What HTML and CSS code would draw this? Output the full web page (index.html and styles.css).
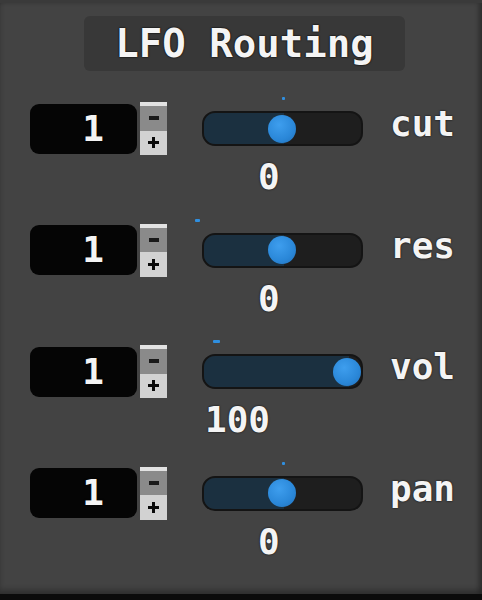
FILE: index.html
```html
<!DOCTYPE html>
<html lang="en">
<head>
  <meta charset="UTF-8" />
  <meta name="viewport" content="width=device-width, initial-scale=1.0" />
  <title>LFO Routing</title>
  <link rel="stylesheet" href="styles.css">
</head>
<body>
  <main class="panel">
    <header class="title">LFO Routing</header>

    <section class="rows">
      <div class="row">
        <div class="controls">
          <div class="num">1</div>
          <div class="spinner">
            <span class="dec"><svg width="10" height="4" viewBox="0 0 10 4"><rect width="10" height="4" fill="#1a1a1a"/></svg></span>
            <span class="inc"><svg width="11" height="11" viewBox="0 0 11 11"><path d="M4 0h3v4h4v3H7v4H4V7H0V4h4z" fill="#0a0a0a"/></svg></span>
          </div>
          <div class="slider">
            <span class="mod" style="left: 80px; width: 3px"></span>
            <span class="fill" style="width: 80px"></span>
            <span class="knob" style="left: 80px"></span>
          </div>
          <div class="label">cut</div>
        </div>
        <div class="value">0</div>
      </div>

      <div class="row">
        <div class="controls">
          <div class="num">1</div>
          <div class="spinner">
            <span class="dec"><svg width="10" height="4" viewBox="0 0 10 4"><rect width="10" height="4" fill="#1a1a1a"/></svg></span>
            <span class="inc"><svg width="11" height="11" viewBox="0 0 11 11"><path d="M4 0h3v4h4v3H7v4H4V7H0V4h4z" fill="#0a0a0a"/></svg></span>
          </div>
          <div class="slider">
            <span class="mod" style="left: -7px; width: 5px"></span>
            <span class="fill" style="width: 80px"></span>
            <span class="knob" style="left: 80px"></span>
          </div>
          <div class="label">res</div>
        </div>
        <div class="value">0</div>
      </div>

      <div class="row">
        <div class="controls">
          <div class="num">1</div>
          <div class="spinner">
            <span class="dec"><svg width="10" height="4" viewBox="0 0 10 4"><rect width="10" height="4" fill="#1a1a1a"/></svg></span>
            <span class="inc"><svg width="11" height="11" viewBox="0 0 11 11"><path d="M4 0h3v4h4v3H7v4H4V7H0V4h4z" fill="#0a0a0a"/></svg></span>
          </div>
          <div class="slider">
            <span class="mod" style="left: 11px; width: 7px"></span>
            <span class="fill" style="width: 145px"></span>
            <span class="knob" style="left: 145px"></span>
          </div>
          <div class="label">vol</div>
        </div>
        <div class="value wide">100</div>
      </div>

      <div class="row">
        <div class="controls">
          <div class="num">1</div>
          <div class="spinner">
            <span class="dec"><svg width="10" height="4" viewBox="0 0 10 4"><rect width="10" height="4" fill="#1a1a1a"/></svg></span>
            <span class="inc"><svg width="11" height="11" viewBox="0 0 11 11"><path d="M4 0h3v4h4v3H7v4H4V7H0V4h4z" fill="#0a0a0a"/></svg></span>
          </div>
          <div class="slider">
            <span class="mod" style="left: 80px; width: 3px"></span>
            <span class="fill" style="width: 80px"></span>
            <span class="knob" style="left: 80px"></span>
          </div>
          <div class="label">pan</div>
        </div>
        <div class="value">0</div>
      </div>
    </section>
  </main>
</body>
</html>
```

FILE: styles.css
```css
:root {
  --panel-bg: #434343;
  --title-bg: #383838;
  --text: #f4f4f4;
  --blue: #2f8fe0;
  --font-pixel: 'DejaVu Sans Mono', 'Liberation Mono', monospace;
}

body {
  margin: 0;
  background: #0b0b0b;
  font-family: var(--font-pixel);
  font-weight: bold;
  color: var(--text);
}

.panel {
  box-sizing: border-box;
  width: 482px;
  height: 594px;
  background: var(--panel-bg);
  border-top: 3px solid #3a3a3a;
  box-shadow: inset -4px 0 4px rgba(0,0,0,0.22), inset 0 -5px 5px rgba(0,0,0,0.22);
  overflow: hidden;
}

.title {
  width: 321px;
  height: 55px;
  margin: 13px 0 0 84px;
  background: var(--title-bg);
  border-radius: 6px;
  font-size: 39px;
  line-height: 55px;
  text-align: center;
  text-shadow: 0 0 2px #000, 0 0 1px #000;
}

.rows {
  margin-top: 31px;
}

.row {
  height: 121.5px;
}

.controls {
  display: flex;
  align-items: center;
  height: 53px;
  padding-left: 30px;
}

.num {
  box-sizing: border-box;
  width: 107px;
  height: 50px;
  background: #050505;
  border-radius: 9px;
  font-size: 36px;
  line-height: 50px;
  text-align: right;
  padding-right: 33px;
  text-shadow: 0 0 2px #000;
}

.spinner {
  display: flex;
  flex-direction: column;
  width: 27px;
  height: 53px;
  margin-left: 3px;
}

.spinner span {
  flex: 1;
  display: flex;
  align-items: center;
  justify-content: center;
}

.dec {
  background: #8a8a8a;
  border-top: 4px solid #e2e2e2;
}

.inc {
  background: #d2d2d2;
}

.slider {
  position: relative;
  box-sizing: border-box;
  width: 161px;
  height: 35px;
  margin-left: 35px;
  background: #1e1e1e;
  border: 2px solid #141414;
  border-radius: 13px;
}

.fill {
  position: absolute;
  left: 0;
  top: 0;
  bottom: 0;
  background: #1b3040;
  border-radius: 11px 0 0 11px;
}

.knob {
  position: absolute;
  top: 50%;
  width: 28px;
  height: 28px;
  margin: -14px 0 0 -16px;
  border-radius: 50%;
  background: radial-gradient(circle at 40% 35%, #3e9eee, #2a87d8 60%, #2270b8);
}

.mod {
  position: absolute;
  top: -16px;
  height: 3px;
  margin-left: -2px;
  background: var(--blue);
  border-radius: 1px;
}

.label {
  align-self: flex-start;
  margin-top: 2px;
  margin-left: 27px;
  font-size: 36px;
  line-height: 40px;
  text-shadow: 0 0 2px #000;
}

.value {
  margin-top: 2px;
  padding-left: 258px;
  font-size: 36px;
  line-height: 40px;
  text-shadow: 0 0 2px #000;
}

.value.wide {
  padding-left: 205px;
}
```
